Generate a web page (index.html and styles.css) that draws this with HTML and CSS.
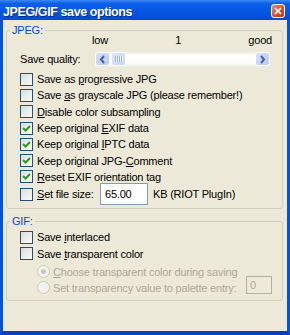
FILE: index.html
```html
<!DOCTYPE html>
<html>
<head>
<title>JPEG/GIF save options</title>
<link rel="stylesheet" href="styles.css">
</head>
<body>
<div class="window">
    <div class="titlebar">
        <span class="title">JPEG/GIF save options</span>
        <span class="close"><svg width="8" height="8" viewBox="0 0 8 8"><path d="M1 1L7 7M7 1L1 7" stroke="#fff" stroke-width="1.7"/></svg></span>
    </div>
    <div class="frame">
        <fieldset class="group">
            <legend>JPEG:</legend>
            <div class="scale"><span>low</span><span>1</span><span>good</span></div>
            <div class="quality">
                <span class="q-label">Save quality:</span>
                <div class="scrollbar">
                    <span class="sb-btn"><svg width="7" height="9" viewBox="0 0 7 9"><path d="M5 1L2 4.5L5 8" fill="none" stroke="#4D6185" stroke-width="2"/></svg></span>
                    <span class="sb-thumb"><i></i><i></i><i></i><i></i></span>
                    <span class="sb-track"></span>
                    <span class="sb-btn"><svg width="7" height="9" viewBox="0 0 7 9"><path d="M2 1L5 4.5L2 8" fill="none" stroke="#4D6185" stroke-width="2"/></svg></span>
                </div>
            </div>
            <div class="checks">
                <div class="row"><span class="box"></span><span>Save as <u>p</u>rogressive JPG</span></div>
                <div class="row"><span class="box"></span><span>Save <u>a</u>s grayscale JPG (please remember!)</span></div>
                <div class="row"><span class="box"></span><span><u>D</u>isable color subsampling</span></div>
                <div class="row"><span class="box"><svg width="9" height="9" viewBox="0 0 9 9"><path d="M1 4L3.5 6.5L8 2" fill="none" stroke="#21A121" stroke-width="2"/></svg></span><span>Keep original <u>E</u>XIF data</span></div>
                <div class="row"><span class="box"><svg width="9" height="9" viewBox="0 0 9 9"><path d="M1 4L3.5 6.5L8 2" fill="none" stroke="#21A121" stroke-width="2"/></svg></span><span>Keep original <u>I</u>PTC data</span></div>
                <div class="row"><span class="box"><svg width="9" height="9" viewBox="0 0 9 9"><path d="M1 4L3.5 6.5L8 2" fill="none" stroke="#21A121" stroke-width="2"/></svg></span><span>Keep original JPG-<u>C</u>omment</span></div>
                <div class="row"><span class="box"><svg width="9" height="9" viewBox="0 0 9 9"><path d="M1 4L3.5 6.5L8 2" fill="none" stroke="#21A121" stroke-width="2"/></svg></span><span><u>R</u>eset EXIF orientation tag</span></div>
                <div class="row size"><span class="box"></span><span class="size-label"><u>S</u>et file size:</span><input class="num" type="text" value="65.00"><span class="unit">KB (RIOT PlugIn)</span></div>
            </div>
        </fieldset>
        <fieldset class="group gif">
            <legend>GIF:</legend>
            <div class="checks">
                <div class="row"><span class="box"></span><span>Save <u>i</u>nterlaced</span></div>
                <div class="row"><span class="box"></span><span>Save <u>t</u>ransparent color</span></div>
                <div class="row radio first"><span class="dot on"></span><span><u>C</u>hoose transparent color during saving</span></div>
                <div class="row radio"><span class="dot"></span><span>Set transparency value to palette entry:</span><input class="entry" type="text" value="0" disabled></div>
            </div>
        </fieldset>
    </div>
</div>
</body>
</html>
```

FILE: styles.css
```css
* {
    box-sizing: border-box;
}
body {
    margin: 0;
    font-family: "Liberation Sans", Arial, sans-serif;
    font-size: 11px;
    letter-spacing: -0.2px;
    color: #000;
    background: #ECE9D8;
}
.window {
    width: 290px;
    height: 335px;
    display: flex;
    flex-direction: column;
}
.titlebar {
    height: 20px;
    flex: none;
    display: flex;
    justify-content: space-between;
    align-items: flex-start;
    padding: 0 5px 0 3px;
    background: linear-gradient(#3D87F4, #0A5EE8 18%, #0556E2 60%, #034CD2);
}
.title {
    color: #fff;
    font-weight: bold;
    font-size: 12.5px;
    letter-spacing: -0.4px;
    line-height: 14px;
    padding-top: 5px;
    text-shadow: 1px 1px #0A2A8A;
}
.close {
    margin-top: 4px;
    width: 14px;
    height: 14px;
    border: 1px solid #fff;
    border-radius: 3px;
    background: linear-gradient(135deg, #EC8869, #D2512E 55%, #B93A1B);
    display: flex;
    align-items: center;
    justify-content: center;
}
.frame {
    flex: 1;
    border: 3px solid #0753D8;
    border-top: 0;
    border-bottom: 4px solid #0641B8;
    background: #ECE9D8;
    padding: 5px 4px 0 3px;
}
.group {
    margin: 0;
    min-width: 0;
    border: 1px solid #D0D0BF;
    border-radius: 3px;
    padding: 0 10px 3px 13px;
}
.group legend {
    margin-left: -10px;
    padding: 0 2px;
    line-height: 10px;
    color: #0046D5;
}
.scale {
    display: flex;
    justify-content: space-between;
    padding-left: 72px;
    line-height: 11px;
}
.quality {
    display: flex;
    align-items: center;
    height: 16px;
    margin-top: 5px;
}
.q-label {
    width: 75px;
}
.scrollbar {
    width: 175px;
    height: 16px;
    display: flex;
    padding: 1px 0;
    background: linear-gradient(#E8E6DC, #FDFDFA 25%, #FDFDFA 75%, #ECEBE3);
}
.sb-btn, .sb-thumb {
    width: 15px;
    height: 14px;
    flex: none;
    border: 1px solid #fff;
    border-radius: 3px;
    background: linear-gradient(135deg, #D4E0FC, #B9CBF6);
    display: flex;
    align-items: center;
    justify-content: center;
}
.sb-thumb {
    margin-left: 1px;
    background: linear-gradient(135deg, #DCE6FC, #C6D5F8);
}
.sb-thumb i {
    width: 1px;
    height: 6px;
    background: #9FB4E6;
    box-shadow: 1px 0 #EEF2FD;
    margin-right: 1px;
}
.sb-track {
    flex: 1;
}
.checks {
    margin-top: 4px;
}
.row {
    display: flex;
    align-items: center;
    height: 16.3px;
    white-space: nowrap;
}
.box {
    width: 13px;
    height: 13px;
    flex: none;
    margin-right: 4px;
    border: 1px solid #1C5180;
    background: linear-gradient(135deg, #DCDCD7, #FBFBF9);
    display: flex;
    align-items: center;
    justify-content: center;
}
.row.size {
    height: 22px;
    margin-top: -2px;
}
.size-label {
    width: 63px;
}
.num {
    width: 48px;
    height: 22px;
    border: 1px solid #7F9DB9;
    background: #fff;
    padding: 0 0 0 4px;
    margin: 0;
    font: inherit;
    letter-spacing: inherit;
    color: #000;
}
.unit {
    margin-left: 5px;
}
.gif {
    margin-top: 7px;
    padding-bottom: 4px;
}
.gif .checks {
    margin-top: 3px;
}
.radio {
    padding-left: 17px;
    color: #ACA899;
}
.radio.first {
    margin-top: 1.7px;
}
.dot {
    width: 13px;
    height: 13px;
    flex: none;
    margin-right: 3px;
    border-radius: 50%;
    border: 1px solid #CAC8BB;
    background: #F3F2EC;
    display: flex;
    align-items: center;
    justify-content: center;
}
.dot.on::after {
    content: "";
    width: 5px;
    height: 5px;
    border-radius: 50%;
    background: #CAC8BB;
}
.entry {
    width: 26px;
    height: 18px;
    margin: -5px 0 0 auto;
    padding: 0 0 0 3px;
    border: 1px solid #B2B0A6;
    background: #ECE9D8;
    font: inherit;
    color: #ACA899;
}
```
